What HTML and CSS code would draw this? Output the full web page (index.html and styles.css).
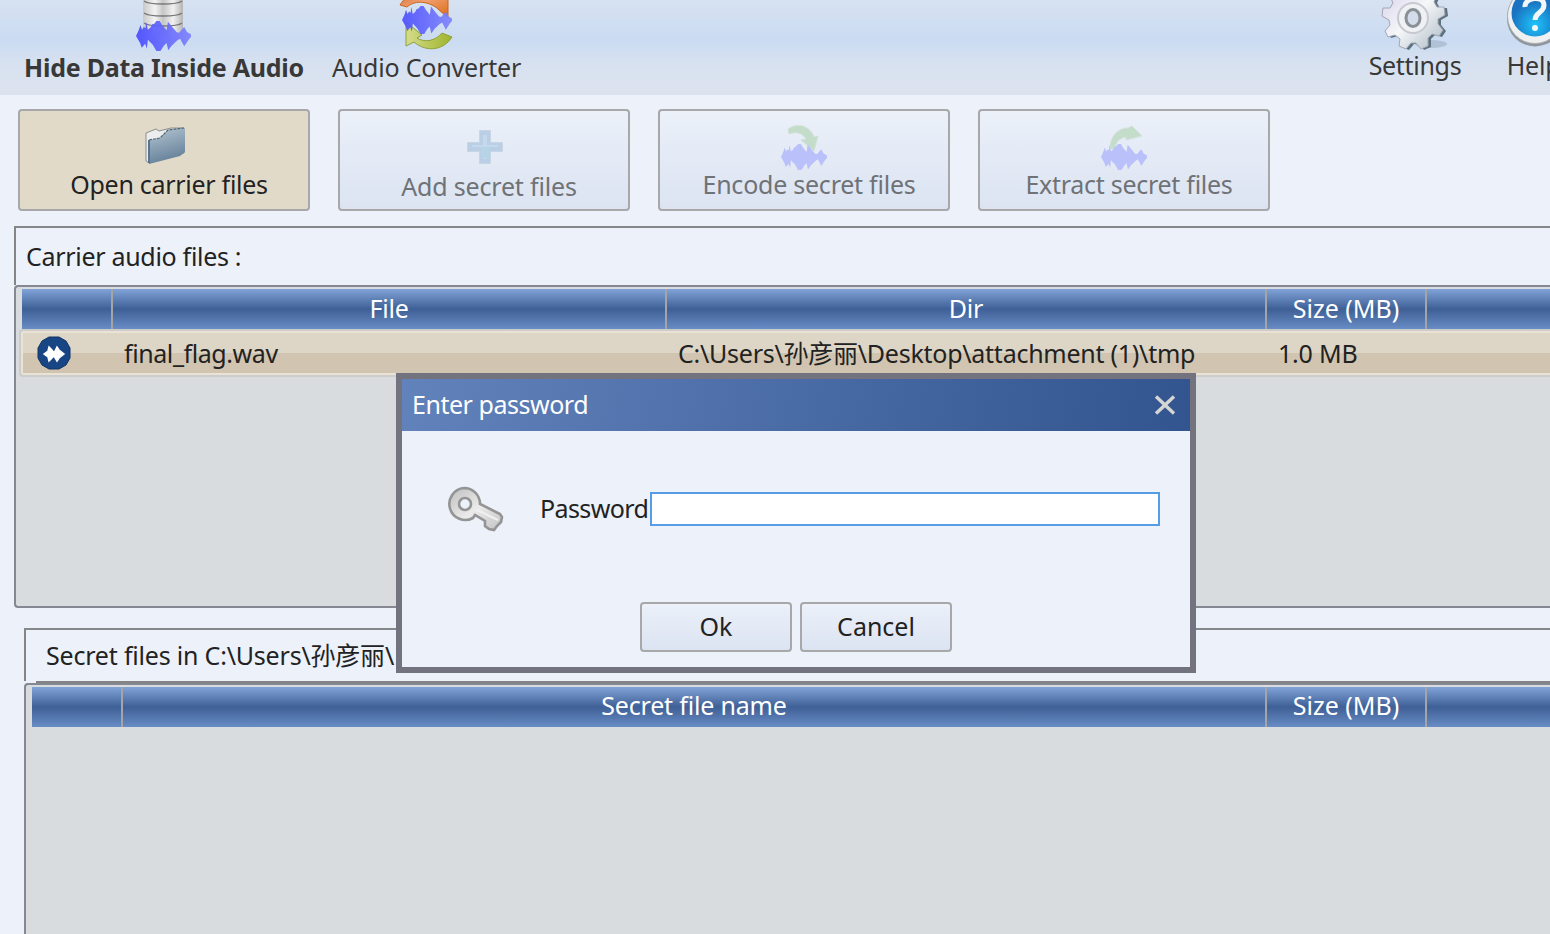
FILE: index.html
```html
<!DOCTYPE html>
<html lang="en">
<head>
    <meta charset="UTF-8">
    <title>Hide Data Inside Audio</title>
    <link rel="stylesheet" href="styles.css">
</head>
<body>

<svg class="defs" width="0" height="0">
    <defs>
        <linearGradient id="wave-fill"><stop offset="0" stop-color="#4a4dff"/><stop offset="1" stop-color="#7f84fc"/></linearGradient>
        <linearGradient id="metal"><stop offset="0" stop-color="#c9c9c9"/><stop offset=".3" stop-color="#f3f3f3"/><stop offset=".5" stop-color="#c6c6c6"/><stop offset=".75" stop-color="#f1f1f1"/><stop offset="1" stop-color="#b4b4b4"/></linearGradient>
        <linearGradient id="orange" x2="1" y2="1"><stop offset="0" stop-color="#d9743a"/><stop offset=".4" stop-color="#f0a070"/><stop offset="1" stop-color="#dd6a10"/></linearGradient>
        <linearGradient id="lime"><stop offset="0" stop-color="#d5dc8a"/><stop offset="1" stop-color="#9fb42c"/></linearGradient>
        <linearGradient id="gear-fill" x2="1" y2="1"><stop offset="0" stop-color="#d5cfeb"/><stop offset=".5" stop-color="#f5f7f9"/><stop offset="1" stop-color="#a9b8c2"/></linearGradient>
        <radialGradient id="help-fill" cy=".75"><stop offset="0" stop-color="#1cc4fb"/><stop offset="1" stop-color="#1b72c0"/></radialGradient>
        <linearGradient id="folder-fill" x2="0.3" y2="1"><stop offset="0" stop-color="#b5c6d1"/><stop offset="1" stop-color="#66819b"/></linearGradient>
        <linearGradient id="key-fill" x2="1" y2="1"><stop offset="0" stop-color="#bdbdbd"/><stop offset=".5" stop-color="#ebebeb"/><stop offset="1" stop-color="#c2c2c2"/></linearGradient>
        <symbol id="wave" viewBox="0 0 162 90" preserveAspectRatio="none">
            <path d="M0 45 8 28 13 12 18 26 23 18 28 22 30 3 35 26 42 20 48 10 54 8 60 0 70 0 77 12 90 28 94 2 105 16 120 34 127 35 142 18 150 33 162 40 162 48 155 56 142 76 130 53 122 58 105 74 95 88 90 66 82 74 72 90 60 90 50 72 35 56 32 83 27 68 17 80 12 66Z"/>
        </symbol>
    </defs>
</svg>

<div class="topbar">
    <div class="tab tab-hide">
        <svg class="tab-icon" width="56" height="52" viewBox="0 0 56 52">
            <path d="M7-4v34c4 7 36 7 40 0V-4z" fill="url(#metal)"/>
            <path d="M8 1c5 4 33 4 38 0M8 13c5 4 33 4 38 0M8 23c5 4 33 4 38 0" fill="none" stroke="#777" stroke-width="1.3"/>
            <use href="#wave" x="0" y="21" width="55" height="30" fill="url(#wave-fill)" opacity=".93"/>
        </svg>
        <span class="t-hide">Hide Data Inside Audio</span>
    </div>
    <div class="tab tab-converter">
        <svg class="tab-icon" width="56" height="52" viewBox="0 0 56 52">
            <path d="M1 5C5-2 11-6 21-6h28v24L39 9C31 2 17-1 8 7z" fill="url(#orange)" stroke="#c86420"/>
            <path d="M7 22 23 35l-5 3c8 5 18 3 25-5l10 4c-8 13-25 16-38 5l-8 4z" fill="url(#lime)" stroke="#8fa238"/>
            <use href="#wave" x="3" y="6" width="50" height="28" fill="url(#wave-fill)" opacity=".9"/>
        </svg>
        <span class="t-converter">Audio Converter</span>
    </div>
    <div class="tab tab-settings">
        <svg class="tab-icon" width="68" height="52" viewBox="0 0 68 52">
            <ellipse cx="50" cy="44" rx="16" ry="4" fill="#9fb0c5" opacity=".6"/>
            <g transform="translate(4 1)">
                <path d="M26-16h6l2 7 7 2 6-4 5 5-3 7 3 5 7 0 1 8-7 4v5l5 6-4 6-7-2-4 4v8l-7 3-5-6h-5l-5 6-7-3 1-7-5-4-7 2-3-6 5-6-1-5-7-4 1-8 7 0 3-5-3-7 5-5 6 4 7-2z" transform="translate(3 1)" fill="#5c7280"/>
                <path d="M26-16h6l2 7 7 2 6-4 5 5-3 7 3 5 7 0 1 8-7 4v5l5 6-4 6-7-2-4 4v8l-7 3-5-6h-5l-5 6-7-3 1-7-5-4-7 2-3-6 5-6-1-5-7-4 1-8 7 0 3-5-3-7 5-5 6 4 7-2z" fill="url(#gear-fill)" stroke="#a5a6b4"/>
                <circle cx="28" cy="17" r="15" fill="#eff1f5" stroke="#c8c8d0" stroke-width="2"/>
                <ellipse cx="28" cy="17" rx="7" ry="8.500" fill="#d3dcea" stroke="#899096" stroke-width="3"/>
            </g>
        </svg>
        <span class="t-settings">Settings</span>
    </div>
    <div class="tab tab-help">
        <svg class="tab-icon" width="60" height="52" viewBox="0 0 60 52">
            <circle cx="31" cy="18.500" r="28" fill="#8f969b"/>
            <circle cx="31" cy="16" r="27.500" fill="#eef0f1" stroke="#aaafb3"/>
            <circle cx="31" cy="13" r="23.500" fill="url(#help-fill)"/>
            <path d="M21 7C20-3 40-5 40 5c0 8-9 7-9 15" fill="none" stroke="#f3f6f7" stroke-width="5"/>
            <circle cx="31" cy="28" r="3" fill="#f3f6f7"/>
        </svg>
        <span class="t-help">Help</span>
    </div>
</div>

<div class="actions">
    <button class="action action-open">
        <svg width="42" height="40" viewBox="0 0 42 40">
            <path d="M1 7 11 3l3 2 8-2 4-1 13 0v25L4 37 1 35z" fill="#eceded" stroke="#898e92"/>
            <path d="M4 14 15 12 23 4 40 2v24l-5 4L4 38z" fill="url(#folder-fill)"/>
            <path d="M4 14 15 12 23 4 39 2" fill="none" stroke="#506573" stroke-width="1.200" stroke-dasharray="3 1"/>
            <path d="M4 14v23" stroke="#587490" stroke-width="2"/>
        </svg>
        <span class="t-open">Open carrier files</span>
    </button>
    <button class="action action-add" disabled>
        <svg width="36" height="34" viewBox="0 0 36 34">
            <path d="M12.500.5h11v12h12v9h-12v12h-11v-12H.5v-9h12z" fill="#bacfe6" stroke="#c8d5e4"/>
            <path d="M16 5h4v10h11v2H20v12h-4V17H5v-2h11z" fill="#c4d9ec"/>
            <path d="M14 17h8v11h-8z" fill="#b5d4e5"/>
        </svg>
        <span class="t-add">Add secret files</span>
    </button>
    <button class="action action-encode" disabled>
        <svg width="48" height="48" viewBox="0 0 48 48">
            <path d="M8 6c10-7 22-3 26 8l4-1-4 15-13-11 5-1c-3-5-8-8-17-5z" fill="#c4ddcb" stroke="#d2e2da"/>
            <use href="#wave" x="1" y="21" width="46" height="26" fill="#b9c0fa"/>
        </svg>
        <span class="t-encode">Encode secret files</span>
    </button>
    <button class="action action-extract" disabled>
        <svg width="48" height="48" viewBox="0 0 48 48">
            <path d="M10 26C10 12 19 5 28 5l4-2 10 10-16 4v-3c-6 1-10 4-11 12z" fill="#c4ddcb" stroke="#d2e2da"/>
            <use href="#wave" x="1" y="21" width="46" height="26" fill="#b9c0fa"/>
        </svg>
        <span class="t-extract">Extract secret files</span>
    </button>
</div>

<div class="panel carrier">
    <div class="panel-title"><span class="t-carrier">Carrier audio files :</span></div>
    <div class="grid">
        <div class="grid-head">
            <div></div>
            <div><span class="t-file">File</span></div>
            <div><span class="t-dir">Dir</span></div>
            <div><span class="t-size">Size (MB)</span></div>
            <div></div>
        </div>
        <div class="grid-row">
            <div class="cell-icon">
                <svg width="34" height="34" viewBox="0 0 34 34">
                    <path d="M12 1h10l7 4 4 7v10l-4 7-7 4H12l-7-4-4-7V12l4-7z" fill="#184684" stroke="#113463"/>
                    <path d="M7 18l4-3 1-4 3 3 2 3 3-6 2 3 5 4-5 4-2 3-3-5-2 2-3 3-1-4z" fill="#fff" stroke="#fff" stroke-width="1.500"/>
                </svg>
            </div>
            <div><span class="t-flag">final_flag.wav</span></div>
            <div><span class="t-path">C:\Users\孙彦丽\Desktop\attachment (1)\tmp</span></div>
            <div><span class="t-mb">1.0 MB</span></div>
            <div></div>
        </div>
    </div>
</div>

<div class="panel secret">
    <div class="panel-title"><span class="t-secret">Secret files in C:\Users\孙彦丽\Desktop</span></div>
    <div class="divider"></div>
    <div class="grid">
        <div class="grid-head">
            <div></div>
            <div><span class="t-name">Secret file name</span></div>
            <div><span class="t-size">Size (MB)</span></div>
            <div></div>
        </div>
    </div>
</div>

<div class="dialog">
    <div class="dialog-title">
        <span class="t-enter">Enter password</span>
        <svg width="22" height="20" viewBox="0 0 22 20"><path d="M2 1.500 20 18.500M20 1.500 2 18.500" stroke="#d6d6d4" stroke-width="3.400"/></svg>
    </div>
    <div class="dialog-field">
        <svg width="60" height="48" viewBox="0 0 60 48">
            <path d="M18 3a16 16 0 1 0 9 30l2-3 10 6v5l4 3 5 1 3-4 4-4 1-5-2-3-20-10A16 16 0 0 0 18 3zm1 10a6 6 0 1 1 0 12 6 6 0 0 1 0-12z" fill="url(#key-fill)" stroke="#949494" stroke-width="2.600"/>
            <path d="M31 25l21 10" stroke="#f0f0f0" stroke-width="2"/>
        </svg>
        <label for="password"><span class="t-password">Password</span></label>
        <input type="password" id="password">
    </div>
    <div class="dialog-buttons">
        <button><span class="t-ok">Ok</span></button>
        <button><span class="t-cancel">Cancel</span></button>
    </div>
</div>

</body>
</html>
```
FILE: styles.css
```css
* {
    box-sizing: border-box;
}
body {
    margin: 0;
    height: 934px;
    overflow: hidden;
    display: flex;
    flex-direction: column;
    background-color: #ecf1fa;
    color: #222;
    font-family: "Noto Sans", "Noto Sans CJK SC", sans-serif;
    font-size: 25px;
    line-height: 34px;
    letter-spacing: -0.2px;
    white-space: nowrap;
}
svg {
    display: block;
    flex: none;
}
.defs {
    position: absolute;
}
button {
    font: inherit;
    letter-spacing: inherit;
    color: inherit;
    padding: 0;
    border: 2px solid #a8a8aa;
    border-radius: 4px;
    background: linear-gradient(#ebf0f9, #dce4f2);
}

/* top bar */
.topbar {
    flex: none;
    height: 95px;
    display: flex;
    color: #383838;
    background: linear-gradient(#d7e2f1, #cadbf2 42%, #d6e1f0 65%, #dde3ee);
}
.tab {
    flex: none;
    display: flex;
    flex-direction: column;
    align-items: center;
}
.tab-icon {
    margin-bottom: -2px;
}
.tab-hide {
    margin-left: 24px;
    width: 280px;
    font-weight: bold;
}
.tab-converter {
    margin-left: 28px;
    width: 189px;
}
.tab-settings {
    margin-left: auto;
    width: 92px;
}
.tab-help {
    margin-left: 44px;
    margin-right: -12px;
    width: 57px;
}
.tab-settings .tab-icon, .tab-help .tab-icon {
    margin-bottom: -4px;
}

/* action buttons */
.actions {
    flex: none;
    display: flex;
    gap: 28px;
    padding: 14px 18px 15px;
}
.action {
    flex: none;
    width: 292px;
    height: 102px;
    display: flex;
    flex-direction: column;
    align-items: center;
    justify-content: flex-end;
    padding-bottom: 8px;
}
.action span {
    padding-left: 10px;
}
.action:disabled {
    color: #6f7276;
}
.action-open {
    background: #e2dac8;
}
.action-open svg {
    margin-left: 3px;
    margin-bottom: 1px;
}
.action-add {
    padding-bottom: 6px;
}
.action-add svg {
    margin-left: 1px;
    margin-bottom: 5px;
}
.action-encode svg, .action-extract svg {
    margin-bottom: -4px;
}

/* file panels */
.panel {
    flex: none;
    display: flex;
    flex-direction: column;
    border-top: 2px solid #85878a;
}
.panel-title {
    flex: none;
    border-left: 2px solid #858585;
}
.grid {
    flex: 1;
    overflow: hidden;
    border: 2px solid #858892;
    border-right: 0;
    border-radius: 4px 0 0 4px;
    background-color: #d8dcdf;
    padding: 2px 0 0 6px;
}
.grid-head {
    display: grid;
    height: 40px;
    color: #fff;
    text-align: center;
    background: linear-gradient(#81a3d8, #3f6096 50%, #688cc5);
}
.grid-head div {
    border-right: 2px solid #a5a5a5;
    padding-top: 2px;
}
.grid-head div:last-child {
    border-right: 0;
}
.carrier {
    height: 382px;
    margin-left: 14px;
}
.carrier .panel-title {
    height: 57px;
    padding: 11px 10px;
}
.carrier .grid-head, .carrier .grid-row {
    grid-template-columns: 91px 554px 600px 160px 1fr;
}
.grid-row {
    display: grid;
    height: 48px;
    margin-left: -3px;
    margin-right: -6px;
    border: 2px solid #ccccca;
    border-radius: 4px 0 0 4px;
    box-shadow: inset 0 0 0 2px #e9e2d5;
    background: linear-gradient(#ddd5c5 50%, #d1c5b1 50%);
}
.grid-row div {
    padding: 5px 0 0 12px;
}
.grid-row .cell-icon {
    padding-left: 16px;
}
.secret {
    flex: 1;
    margin: 20px 0 0 24px;
}
.secret .panel-title {
    height: 51px;
    padding: 8px 20px;
}
.divider {
    height: 2px;
    margin-left: 12px;
    background-color: #838383;
}
.secret .grid {
    border-bottom: 0;
    border-bottom-left-radius: 0;
}
.secret .grid-head {
    grid-template-columns: 91px 1144px 160px 1fr;
}
.secret .grid-head div {
    padding-top: 1px;
}

/* password dialog */
.dialog {
    position: absolute;
    left: 396px;
    top: 373px;
    width: 800px;
    height: 300px;
    border: 6px solid #72737f;
    background-color: #ecf1fa;
}
.dialog-title {
    height: 52px;
    padding: 0 14px 0 10px;
    display: flex;
    align-items: center;
    justify-content: space-between;
    color: #fff;
    background: linear-gradient(100deg, #6282bb, #32558f);
}
.dialog-title span, .dialog-field label {
    padding-bottom: 2px;
}
.dialog-field {
    display: flex;
    align-items: center;
    padding: 54px 30px 0 44px;
}
.dialog-field label {
    margin-left: 34px;
    width: 110px;
}
.dialog-field input {
    width: 510px;
    height: 34px;
    border: 2px solid #569de5;
    background: #fff;
}
.dialog-buttons {
    display: flex;
    justify-content: center;
    gap: 8px;
    margin-top: 69px;
}
.dialog-buttons button {
    width: 152px;
    height: 50px;
    padding-bottom: 2px;
}

/* text spacing */
.t-open, .t-extract {
    letter-spacing: -0.28px;
}
.t-hide, .t-encode {
    letter-spacing: -0.24px;
}
.t-add, .t-converter, .t-name {
    letter-spacing: -0.18px;
}
.t-settings {
    letter-spacing: -0.3px;
}
.t-size, .t-ok, .t-cancel {
    letter-spacing: 0;
}
.t-carrier {
    letter-spacing: -0.3px;
}
.t-path {
    letter-spacing: -0.25px;
}
.t-secret {
    letter-spacing: -0.2px;
}
.t-flag {
    letter-spacing: -0.42px;
}
.t-enter {
    letter-spacing: -0.47px;
}
.t-password {
    letter-spacing: -0.6px;
}
```
